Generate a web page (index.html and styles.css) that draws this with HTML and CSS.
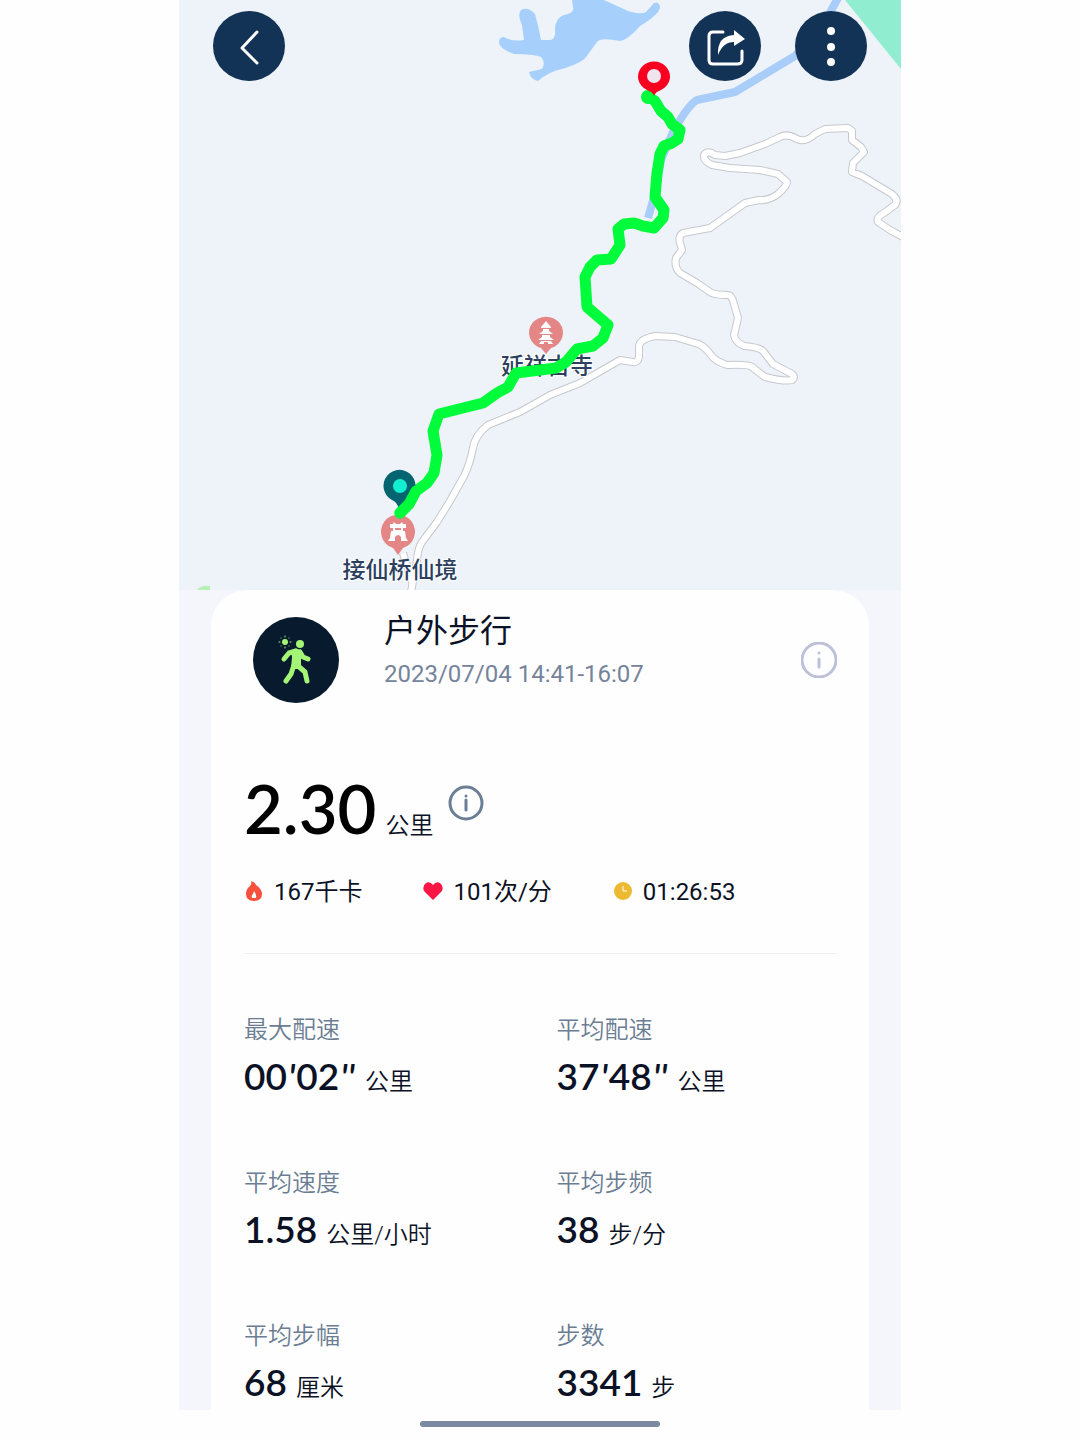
FILE: index.html
```html
<!DOCTYPE html>
<html lang="zh-CN">
<head>
<meta charset="utf-8">
<meta name="viewport" content="width=device-width, initial-scale=1">
<title>户外步行</title>
<link rel="stylesheet" href="styles.css">
</head>
<body>
<div class="screen">
  <header class="map">
    <svg class="map-art" viewBox="0 0 722 590" role="img" aria-label="步行轨迹">
      <g transform="translate(-179 0)">
        <path class="park" d="M845 0H901V69Z"/>
        <path class="grass" d="M197 590Q201 585 210 586V590Z"/>
        <path class="water" d="M499 43Q499 36 504 37Q512 42 524 40L522 25Q517 14 521 10Q528 6 535 14Q539 28 541 40H551Q556 38 555 30Q555 18 564 15Q575 13 573 7L572 0H604L628 11Q641 15 646 12L654 3Q659 1 660 7Q660 14 640 26Q628 40 620 41Q600 37 597 42L586 57Q582 63 562 69Q550 71 538 81Q531 80 529 72L542 69Q546 62 541 57Q534 54 514 54Q500 49 499 43Z"/>
        <path class="river" d="M838 -2L826 20L795 56L770 71L735 92L697 100Q688 105 673 132L661 160L656 190L648 218"/>
        <path class="road-edge" d="M403 553L413 585M905 238L890 230L878 222Q876 217 884 213L895 205Q899 200 892 194L862 176L852 172L853 163L864 152L861 147L852 140L852 131L848 128L825 129L815 134Q806 143 797 139Q787 133 780 137L765 144L740 153L725 156L715 155Q708 150 704 155Q703 161 712 165L730 168L760 170L778 174L787 182Q787 186 778 194Q769 201 759 200L745 203L710 228L683 233Q678 236 680 243L682 250L676 258Q674 267 680 273L697 283L710 292Q714 295 728 295Q732 295 734 304L738 318L734 335Q735 342 744 346Q759 347 763 351L773 364L792 374Q796 377 792 380Q785 382 765 377L752 367Q748 364 727 365Q715 361 711 355Q703 344 695 343L675 337L655 336Q640 339 639 346V357Q638 363 633 362L620 360L580 383L550 395L520 412L488 425Q475 435 473 448Q470 464 464 476L450 501L437 522L422 542Q418 548 417 560L411 592"/>
        <path class="road-fill" d="M403 553L413 585M905 238L890 230L878 222Q876 217 884 213L895 205Q899 200 892 194L862 176L852 172L853 163L864 152L861 147L852 140L852 131L848 128L825 129L815 134Q806 143 797 139Q787 133 780 137L765 144L740 153L725 156L715 155Q708 150 704 155Q703 161 712 165L730 168L760 170L778 174L787 182Q787 186 778 194Q769 201 759 200L745 203L710 228L683 233Q678 236 680 243L682 250L676 258Q674 267 680 273L697 283L710 292Q714 295 728 295Q732 295 734 304L738 318L734 335Q735 342 744 346Q759 347 763 351L773 364L792 374Q796 377 792 380Q785 382 765 377L752 367Q748 364 727 365Q715 361 711 355Q703 344 695 343L675 337L655 336Q640 339 639 346V357Q638 363 633 362L620 360L580 383L550 395L520 412L488 425Q475 435 473 448Q470 464 464 476L450 501L437 522L422 542Q418 548 417 560L411 592"/>
        <path class="poi" d="M546 354L541 348A17 16 0 1 1 551 348Z"/>
        <path class="poi-glyph" d="M546 321L551 327V328H541V327ZM543 329H549V331L553 334H539L543 331ZM542 335H550V337L554 340H538L542 337ZM541 341H551L553 344H548V342H544V344H539Z"/>
        <path class="poi" d="M398 555L393 548A17 17 0 1 1 403 548Z"/>
        <path class="poi-glyph" fill-rule="evenodd" d="M390 524H393L394 522L396 524H400L402 522L403 524H406V528H403V531H405L406 538L408 541H401V537Q398 533 395 537V541H388L390 538L391 531H393V528H390ZM395 528V530H401V528Z"/>
        <text class="place" x="547" y="374">延祥古寺</text>
        <text class="place" x="400" y="578">接仙桥仙境</text>
        <path class="route" d="M649 97L655 101L661 111L668 117L672 124L680 130L678 139L672 143L664 146L660 154L657 173L655 197L664 210L663 218L654 228L643 226L634 223L624 224L618 229L620 245L611 259L597 260L590 267L585 277L587 307L608 325L603 338L593 346L577 349L566 362L556 368L516 373L508 387L497 393L483 403L439 414L433 431L437 455L434 473L427 483L416 491L409 504L400 513"/>
        <circle class="route-end" cx="648" cy="97" r="7"/>
        <path class="pin-end" d="M654 96Q653 92 647 90A16 15 0 1 1 661 90Q655 92 654 96Z"/>
        <circle class="pin-end-dot" cx="654" cy="76" r="7"/>
        <path class="pin-start" d="M399 509Q397 502 392 500A16 16 0 1 1 407 500Q401 503 399 509Z"/>
        <path class="route" d="M400 513L409 504L416 491"/>
        <circle class="pin-start-dot" cx="400" cy="486" r="7"/>
      </g>
    </svg>
    <nav class="toolbar">
      <button class="round-btn" type="button" aria-label="返回">
        <svg viewBox="0 0 72 70"><path class="line" d="M44 21L29 37L44 52"/></svg>
      </button>
      <button class="round-btn push" type="button" aria-label="分享">
        <svg viewBox="0 0 72 70"><path class="line" d="M34 21H24Q20 21 20 25V49Q20 53 24 53H48Q53 53 53 49V40"/><path class="solid" d="M29 44Q28 25 45 24V19L56 28L45 35V31Q34 31 29 44Z"/></svg>
      </button>
      <button class="round-btn" type="button" aria-label="更多">
        <svg viewBox="0 0 72 70"><g class="solid"><circle cx="36" cy="20" r="4"/><circle cx="36" cy="36" r="4"/><circle cx="36" cy="51" r="4"/></g></svg>
      </button>
    </nav>
  </header>

  <main class="card">
    <section class="activity">
      <svg class="badge" viewBox="0 0 86 86" aria-hidden="true">
        <circle class="badge-bg" cx="43" cy="43" r="43"/>
        <circle class="badge-fill" cx="32" cy="25" r="3"/>
        <path class="badge-line ray" d="M32 19V20M32 30V31M26 25H27M37 25H38M28 21L28 21M36 21L36 21M28 29L28 29M36 29L36 29"/>
        <circle class="badge-fill" cx="47" cy="27" r="4"/>
        <path class="badge-line limb" d="M43 34L36 36L31 42M47 35L50 40L55 42M41 48L38 57L33 64M44 48L52 55L54 64"/>
        <path class="badge-fill" d="M38 34Q42 29 49 34L48 42V52H38L39 40Z"/>
      </svg>
      <div class="activity-text">
        <h1 class="activity-name">户外步行</h1>
        <p class="activity-date">2023/07/04 14:41-16:07</p>
      </div>
      <button class="info info-light" type="button" aria-label="活动说明">
        <svg viewBox="0 0 36 36"><circle cx="18" cy="18" r="17"/><path d="M18 17V25M18 11V11"/></svg>
      </button>
    </section>

    <section class="distance">
      <span class="distance-value">2.30</span>
      <span class="unit">公里</span>
      <button class="info" type="button" aria-label="距离说明">
        <svg viewBox="0 0 36 36"><circle cx="18" cy="18" r="16"/><path d="M18 15V25M18 11V11"/></svg>
      </button>
    </section>

    <ul class="summary">
      <li><svg viewBox="0 0 20 24" aria-hidden="true"><path class="flame" d="M7 1Q11 2 12 5Q18 9 18 14Q18 21 10 21Q2 21 2 14Q2 9 6 6Q8 4 7 1Z"/><path class="solid" d="M10 11Q13 15 12 18H8Q7 15 9 14Z"/></svg>167千卡</li>
      <li><svg viewBox="0 0 20 24" aria-hidden="true"><path class="heart" d="M10 20L1 11Q-1 6 3 3Q7 1 10 5Q13 1 17 3Q21 6 19 11Z"/></svg>101次/分</li>
      <li><svg viewBox="0 0 20 24" aria-hidden="true"><circle class="clock" cx="10" cy="11" r="9"/><path class="clock-hand" d="M10 6V11H14"/></svg>01:26:53</li>
    </ul>

    <dl class="stats">
      <div><dt>最大配速</dt><dd><b>00<i>'</i>02<i>''</i></b><span class="unit">公里</span></dd></div>
      <div><dt>平均配速</dt><dd><b>37<i>'</i>48<i>''</i></b><span class="unit">公里</span></dd></div>
      <div><dt>平均速度</dt><dd><b>1.58</b><span class="unit">公里/小时</span></dd></div>
      <div><dt>平均步频</dt><dd><b>38</b><span class="unit">步/分</span></dd></div>
      <div><dt>平均步幅</dt><dd><b>68</b><span class="unit">厘米</span></dd></div>
      <div><dt>步数</dt><dd><b>3341</b><span class="unit">步</span></dd></div>
    </dl>
  </main>
</div>
<footer class="home-area"><div class="home-bar"></div></footer>
</body>
</html>
```
FILE: styles.css
```css
* { box-sizing: border-box; }
body {
  margin: 0;
  background: #fefefe;
  color: #0c1226;
  font-family: Roboto, "Noto Sans CJK SC", sans-serif;
}
h1, p, ul, dl, dd { margin: 0; padding: 0; }
button { padding: 0; border: 0; background: none; cursor: pointer; }
svg { display: block; fill: none; }

.screen {
  max-width: 722px;
  margin: 0 auto;
  background: #f4f6fb;
}

/* Map */
.map { position: relative; background: #eef3f9; }
.map-art { width: 100%; height: auto; }
.park { fill: #91edd0; }
.grass { fill: #b5f0b4; }
.water { fill: #a6cffb; }
.river { stroke: #a8cdf8; stroke-width: 8; stroke-linejoin: round; }
.road-edge { stroke: #c6c8cd; stroke-width: 8; stroke-linejoin: round; }
.road-fill { stroke: #fff; stroke-width: 6; stroke-linejoin: round; }
.poi { fill: #e58686; }
.poi-glyph { fill: #fff; }
.place {
  fill: #2c3f5e;
  stroke: #fff;
  stroke-width: 2px;
  paint-order: stroke;
  font-size: 23px;
  font-weight: 500;
  text-anchor: middle;
}
.route { stroke: #00fc3a; stroke-width: 11; stroke-linejoin: round; stroke-linecap: round; }
.route-end { fill: #00fc3a; }
.pin-end { fill: #f8001f; }
.pin-end-dot { fill: #f0e4ee; }
.pin-start { fill: #04646f; }
.pin-start-dot { fill: #14eed0; }

.toolbar {
  position: absolute;
  inset: 11px 34px auto;
  display: flex;
  gap: 34px;
}
.push { margin-left: auto; }
.round-btn {
  width: 72px;
  height: 70px;
  border-radius: 50%;
  background: #123356;
}
.line { stroke: #fff; stroke-width: 3; stroke-linecap: round; stroke-linejoin: round; }
.solid { fill: #fff; }

/* Card */
.card {
  margin: 0 32px;
  padding: 20px 32px 6px 33px;
  border-radius: 36px 36px 0 0;
  background: #fefefe;
}
.activity {
  display: flex;
  align-items: center;
  gap: 45px;
  padding-left: 9px;
}
.badge { width: 86px; height: 86px; flex: none; }
.badge-bg { fill: #071a2e; }
.badge-fill { fill: #a4f576; }
.badge-line { stroke: #a4f576; stroke-linecap: round; stroke-linejoin: round; }
.ray { stroke-width: 1; }
.limb { stroke-width: 5; }
.activity-text { flex: 1; padding-bottom: 20px; }
.activity-name { font-size: 32px; line-height: 42px; font-weight: 400; }
.activity-date { margin-top: 6px; font-size: 24px; line-height: 32px; color: #75839b; }

.info { width: 36px; height: 36px; flex: none; stroke: #6b7e96; stroke-width: 3; stroke-linecap: round; }
.info-light { stroke: #bcc0d8; }

.distance {
  display: flex;
  align-items: baseline;
  height: 72px;
  margin-top: 62px;
}
.distance-value {
  font-family: Lato, sans-serif;
  font-size: 67px;
  line-height: 72px;
  font-weight: 600;
  color: #000;
}
.unit { margin-left: 9px; font-size: 24px; line-height: 24px; font-weight: 350; }
.distance .info { align-self: flex-start; margin: 13px 0 0 15px; }

.summary {
  display: flex;
  gap: 61px;
  padding-bottom: 45px;
  margin-top: 32px;
  border-bottom: 1px solid #eeeff1;
  list-style: none;
  font-size: 24px;
  line-height: 32px;
}
.summary li { display: flex; align-items: center; gap: 10px; }
.summary svg { width: 20px; height: 24px; }
.flame { fill: #f5513c; }
.heart { fill: #fb1745; }
.clock { fill: #edb931; }
.clock-hand { stroke: #fff; stroke-width: 1; }

.stats {
  display: grid;
  grid-template-columns: 1fr 1fr;
  gap: 69px 32px;
  margin-top: 60px;
}
.stats dt { font-size: 24px; line-height: 32px; font-weight: 350; color: #6a7d92; }
.stats dd { display: flex; align-items: baseline; height: 44px; margin-top: 8px; }
.stats b { font-family: Lato, sans-serif; font-size: 37px; line-height: 44px; font-weight: 600; }
.stats i { margin: 0 1px; }

.home-area { padding: 11px 0 13px; }
.home-bar { width: 240px; height: 6px; margin: 0 auto; border-radius: 3px; background: #7b88a1; }
```
